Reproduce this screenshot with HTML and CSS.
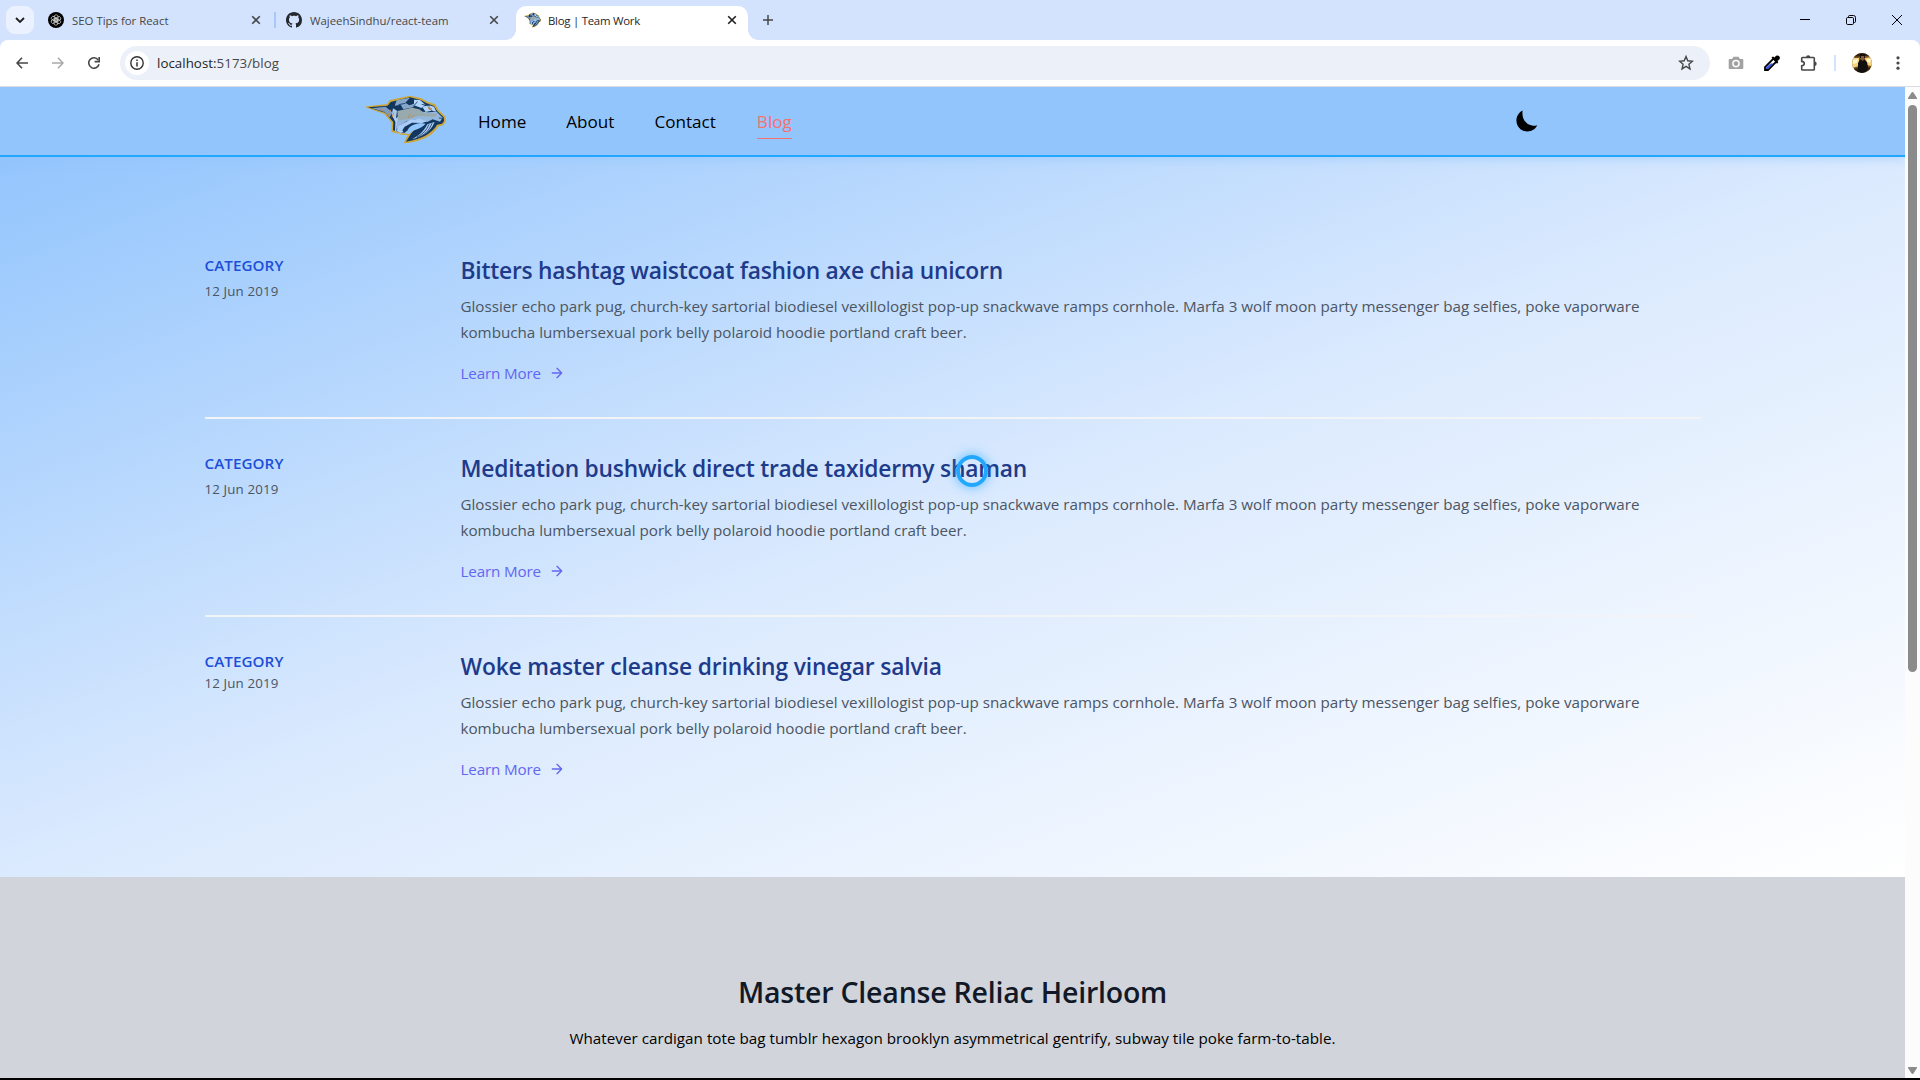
FILE: index.html
```
<!DOCTYPE html>
<html lang="en">
<head>
<meta charset="utf-8">
<title>Blog | Team Work</title>
<link rel="stylesheet" href="styles.css">
</head>
<body>
<svg class="defs" width="0" height="0" aria-hidden="true">
  <symbol id="cat" viewBox="0 0 270 174">
    <path d="M20 51L82 44L90 32L114 27L150 19L184 27L202 37L225 45L235 62L254 80L255 94L249 104L233 108C220 132 190 152 134 158L146 134L124 132L96 124L97 98L74 70Z" fill="#cda63a" stroke="#cda63a" stroke-width="4" stroke-linejoin="round"/>
    <path d="M24 52L83 47L92 36L116 30L150 22L182 30L200 40L222 48L232 64L251 82L252 93L246 101L231 104C218 128 188 146 138 155C148 140 152 130 160 122L142 128L126 129L99 121L100 96L76 68Z" fill="#13365f"/>
    <path d="M143 121C146 112 156 102 182 99L197 101C190 109 178 116 163 121L152 128L147 133L132 130Z" fill="#93c5fd"/>
    <path d="M99 55l12 7-3 23 13-11 12 3-8 14-14 14-2 23 22 4-16-1-10-8 1-27-11-22z" fill="#a9c9ee"/>
    <path d="M35 55l42-5 8 7 12 10-8 15-16-17z" fill="#7d9cc0"/>
    <path d="M110 31l40-8-14 15 12 8 27-9-15 15-30 6-8-14-18 3z" fill="#86a6cc"/>
    <path d="M162 29l18 1 16 14-12 10-22-8zM187 51l18-6 17 5 7 15-15-3-17 4z" fill="#b4d5fb"/>
    <path d="M130 68l34-5 40 4 26-2 18 18-8 12-22-7-16 8-28-9-34 6-30 22 2-22z" fill="#94b7de"/>
    <path d="M112 63l44-10 22 5 14 11 40 3-8 8-49-2-31 10-30 3z" fill="#99aaae"/>
    <path d="M112 110l36-20 30-4 23 8-14 5-31-1-22 12-7 11 4 6-10 2-10-5z" fill="#a9cdf7"/>
    <path d="M202 103l22-7-6 12c-13 20-31 33-63 40 20-10 37-24 47-45z" fill="#a9cdf7"/>
    <path d="M216 100c-8 22-24 37-48 45M207 103c-7 17-18 29-36 38M185 43l25 5M160 50l12-15M204 50l13 13M116 44l20-4M237 84l10 1" fill="none" stroke="#173a63" stroke-width="2.500"/>
    <path d="M205 53l10 3-7 3zM66 57l5 8M92 59l-7 17M101 68l-5 14M151 72l-6 12M162 75l-7 8" fill="none" stroke="#c58a4a" stroke-width="3"/>
  </symbol>
  <symbol id="arrow" viewBox="0 0 24 24"><path d="M5 12h14M12 5l7 7-7 7" fill="none" stroke="currentColor" stroke-width="2" stroke-linecap="round" stroke-linejoin="round"/></symbol>
  <symbol id="close" viewBox="0 0 10 10"><path d="M1.200 1.200l7.600 7.600M8.800 1.200L1.200 8.800" stroke="currentColor" stroke-width="1.600"/></symbol>
</svg>

<div class="tabstrip">
  <div class="tab-search"><svg width="10" height="6" viewBox="0 0 10 6"><path d="M1 1l4 4 4-4" fill="none" stroke="#1f1f1f" stroke-width="1.800"/></svg></div>
  <div class="tab tab-seo">
    <svg width="16" height="16" viewBox="0 0 16 16"><circle cx="8" cy="8" r="8"/><g fill="none" stroke="#c9c9c9" stroke-width=".8"><rect x="6.300" y="2.800" width="3.700" height="6.400" rx="1.800"/><rect x="6.300" y="2.800" width="3.700" height="6.400" rx="1.800" transform="rotate(60 8 8)"/><rect x="6.300" y="2.800" width="3.700" height="6.400" rx="1.800" transform="rotate(120 8 8)"/><rect x="6.300" y="2.800" width="3.700" height="6.400" rx="1.800" transform="rotate(180 8 8)"/><rect x="6.300" y="2.800" width="3.700" height="6.400" rx="1.800" transform="rotate(240 8 8)"/><rect x="6.300" y="2.800" width="3.700" height="6.400" rx="1.800" transform="rotate(300 8 8)"/></g></svg>
    <span class="tab-title">SEO Tips for React</span>
    <svg class="x" width="10" height="10"><use href="#close"/></svg>
  </div>
  <span class="tab-sep"></span>
  <div class="tab tab-git">
    <svg width="16" height="16" viewBox="0 0 16 16"><path fill="#24292f" fill-rule="evenodd" d="M8 0C3.580 0 0 3.580 0 8c0 3.540 2.290 6.530 5.470 7.590.4.070.55-.17.55-.38 0-.19-.01-.82-.01-1.490-2.010.37-2.530-.49-2.690-.94-.09-.23-.48-.94-.82-1.130-.28-.15-.68-.52-.01-.53.63-.01 1.080.58 1.230.82.72 1.210 1.870.87 2.330.66.07-.52.28-.87.51-1.070-1.780-.2-3.640-.89-3.640-3.950 0-.87.31-1.590.82-2.150-.08-.2-.36-1.020.08-2.120 0 0 .67-.21 2.200.82.64-.18 1.320-.27 2-.27s1.360.09 2 .27c1.530-1.040 2.200-.82 2.200-.82.44 1.100.16 1.920.08 2.120.51.56.82 1.270.82 2.150 0 3.070-1.870 3.750-3.650 3.950.29.25.54.73.54 1.480 0 1.070-.01 1.930-.01 2.200 0 .21.15.46.55.38A8.010 8.010 0 0016 8c0-4.420-3.580-8-8-8z"/></svg>
    <span class="tab-title">WajeehSindhu/react-team</span>
    <svg class="x" width="10" height="10"><use href="#close"/></svg>
  </div>
  <div class="tab tab-active">
    <svg width="17" height="16" viewBox="14 12 246 152" preserveAspectRatio="none"><use href="#cat" width="270" height="174"/></svg>
    <span class="tab-title tight">Blog | Team Work</span>
    <svg class="x" width="10" height="10"><use href="#close"/></svg>
  </div>
  <svg class="new-tab" width="10" height="10" viewBox="0 0 10 10"><path d="M5 0v10M0 5h10" stroke="#474747" stroke-width="1.500"/></svg>
  <div class="window-buttons">
    <svg width="10" height="10" viewBox="0 0 10 10"><path d="M0 4.500h10" stroke="#000"/></svg>
    <svg width="10" height="10" viewBox="0 0 10 10"><path d="M2.500 2V1.500q0-1 1-1h4q2 0 2 2v4q0 1-1 1H8" fill="none" stroke="#000"/><rect x=".5" y="2.500" width="7" height="7" rx="1.200" fill="none" stroke="#000"/></svg>
    <svg width="10" height="10" viewBox="0 0 10 10"><path d="M0 0l10 10M10 0L0 10" stroke="#000"/></svg>
  </div>
</div>

<div class="toolbar-back">
<div class="toolbar">
  <div class="nav-buttons">
    <svg width="12" height="12" viewBox="0 0 12 12"><path d="M12 6H1.200M6 .8L1 6l5 5.200" fill="none" stroke="#474747" stroke-width="1.600"/></svg>
    <svg width="12" height="12" viewBox="0 0 12 12"><path d="M0 6h10.800M6 .8L11 6l-5 5.200" fill="none" stroke="#aaa" stroke-width="1.600"/></svg>
    <svg width="12" height="12" viewBox="0 0 12 12"><path d="M10.200 3A5.200 5.200 0 1 0 11 7.300" fill="none" stroke="#474747" stroke-width="1.600"/><path d="M11.200 0v4.600H6.600" fill="none" stroke="#474747" stroke-width="1.600"/></svg>
  </div>
  <div class="omnibox">
    <span class="site-info"><svg width="14" height="14" viewBox="0 0 14 14"><circle cx="7" cy="7" r="6.200" fill="none" stroke="#333" stroke-width="1.400"/><path d="M7 6.200v4.200M7 3.400V5" stroke="#333" stroke-width="1.500"/></svg></span>
    <span class="url"><span class="host">localhost:</span>5173/blog</span>
    <svg class="star" width="16" height="16" viewBox="0 0 16 16"><path d="M8 1.500l1.800 4.300 4.700.4-3.600 3.100 1.100 4.600L8 11.400l-4 2.500 1.100-4.600L1.500 6.200l4.700-.4z" fill="none" stroke="#474747" stroke-width="1.400"/></svg>
  </div>
  <div class="extensions">
    <svg width="16" height="16" viewBox="0 0 16 16"><path fill="#a2a2a2" d="M1.500 4H4l1.500-2.200h5L12 4h2.500q.8 0 .8.800v8.400q0 .8-.8.800h-13q-.8 0-.8-.8V4.800q0-.8.8-.8z"/><circle cx="8" cy="8.600" r="3.100" fill="#a2a2a2" stroke="#fff" stroke-width="1.500"/></svg>
    <svg class="dropper" width="16" height="16" viewBox="0 0 16 16"><path d="M9.500 3.500l3 3L4 15H1v-3z" fill="#fff" stroke="#000" stroke-width="1.800"/><path d="M6.500 8.500h3L4 14H2v-1.500z" fill="#3b55d9"/><path d="M7.500 2.500L9 1.500l1.500 1L12 .8q2-1 3.200.4t.3 3L13.500 6l.8 1.200-1.300 1.600z"/></svg>
    <svg width="18" height="18" viewBox="0 0 18 18"><path d="M2.500 3.500h11q.8 0 .8.800v10.900q0 .8-.8.800h-11q-.8 0-.8-.8v-3.400q2.600-.3 2.600-2.200T1.700 7.400V4.300q0-.8.800-.8z" fill="none" stroke="#474747" stroke-width="1.600"/><path d="M6 3.500a2.200 2.200 0 0 1 4.400 0zM14.500 7.500a2.200 2.200 0 0 1 0 4.400z" fill="#474747"/></svg>
  </div>
  <span class="bar-sep"></span>
  <svg class="avatar" width="20" height="20" viewBox="0 0 20 20"><clipPath id="round"><circle cx="10" cy="10" r="10"/></clipPath><g clip-path="url(#round)"><path fill="#7b5520" d="M0 0h20v20H0z"/><path fill="#f3d37b" d="M0 5l7 0v8l-7 2zM13 5l7-1v9l-6-1z"/><path fill="#fff6d0" d="M1 7l5-1-1 4-4 1zM15 6h4l-1 4-3-1z"/><path fill="#342010" d="M0 0h20v3L12 3 0 4zM0 16l6-1v5H0zM15 14l5 1v5h-5z"/><path fill="#12100f" d="M6 20V10l2-3.500h4.500L15 9l1 5-2 6zM8 1h5v4H8z"/><path fill="#8b5a3b" d="M9 3h3.200v3.500L10.500 8 9 6.500z"/></g></svg>
  <svg class="dots" width="4" height="14" viewBox="0 0 4 14" fill="#474747"><circle cx="2" cy="1.800" r="1.600"/><circle cx="2" cy="7" r="1.600"/><circle cx="2" cy="12.200" r="1.600"/></svg>
</div>
</div>

<div class="viewport">
  <div class="page">
    <header class="site-nav">
      <svg class="logo" width="90" height="58"><use href="#cat"/></svg>
      <nav class="links">
        <a>Home</a><a>About</a><a>Contact</a><a class="current">Blog</a>
      </nav>
      <svg class="moon" width="22" height="22" viewBox="0 0 22 22"><path d="M6.600.5C2.700 2.600.4 6.200.4 10.500c0 6.200 4.800 10.900 10.900 10.900 4.500 0 8.200-2.400 10-6.200-1.500.5-2.800.6-4.300.5C10.500 15.300 5.400 9.500 6.600.5z"/></svg>
    </header>
    <main class="posts">
      <article class="post">
        <div class="meta"><span class="category">CATEGORY</span><span class="date">12 Jun 2019</span></div>
        <div class="body">
          <h2>Bitters hashtag waistcoat fashion axe chia unicorn</h2>
          <p>Glossier echo park pug, church-key sartorial biodiesel vexillologist pop-up snackwave ramps cornhole. Marfa 3 wolf moon party messenger bag selfies, poke vaporware<br>kombucha lumbersexual pork belly polaroid hoodie portland craft beer.</p>
          <a class="more">Learn More<svg width="16" height="16"><use href="#arrow"/></svg></a>
        </div>
      </article>
      <article class="post">
        <div class="meta"><span class="category">CATEGORY</span><span class="date">12 Jun 2019</span></div>
        <div class="body">
          <h2>Meditation bushwick direct trade taxidermy shaman</h2>
          <p>Glossier echo park pug, church-key sartorial biodiesel vexillologist pop-up snackwave ramps cornhole. Marfa 3 wolf moon party messenger bag selfies, poke vaporware<br>kombucha lumbersexual pork belly polaroid hoodie portland craft beer.</p>
          <a class="more">Learn More<svg width="16" height="16"><use href="#arrow"/></svg></a>
        </div>
      </article>
      <article class="post">
        <div class="meta compact"><span class="category">CATEGORY</span><span class="date">12 Jun 2019</span></div>
        <div class="body">
          <h2 class="loose">Woke master cleanse drinking vinegar salvia</h2>
          <p>Glossier echo park pug, church-key sartorial biodiesel vexillologist pop-up snackwave ramps cornhole. Marfa 3 wolf moon party messenger bag selfies, poke vaporware<br>kombucha lumbersexual pork belly polaroid hoodie portland craft beer.</p>
          <a class="more">Learn More<svg width="16" height="16"><use href="#arrow"/></svg></a>
        </div>
      </article>
    </main>
    <section class="promo">
      <h1>Master Cleanse Reliac Heirloom</h1>
      <p>Whatever cardigan tote bag tumblr hexagon brooklyn asymmetrical gentrify, subway tile poke farm-to-table.</p>
    </section>
  </div>
  <div class="scrollbar">
    <svg width="9" height="7" viewBox="0 0 9 7"><path d="M4.500 0q.7 0 1.100.7L9 6q.2 1-.6 1H.6Q-.2 7 0 6L3.400.7Q3.800 0 4.500 0z" fill="#8b8b8b"/></svg>
    <div class="thumb"></div>
    <svg width="9" height="7" viewBox="0 0 9 7"><path d="M4.500 7q.7 0 1.100-.7L9 1q.2-1-.6-1H.6Q-.2 0 0 1l3.400 5.300q.4.700 1.100.7z" fill="#8b8b8b"/></svg>
  </div>
</div>
<div class="cursor-ring"></div>
</body>
</html>
```
FILE: styles.css
```
* { box-sizing: border-box; }
html, body { margin: 0; height: 100%; overflow: hidden; }
body {
  display: flex;
  flex-direction: column;
  height: 1080px;
  padding-bottom: 2px;
  background: #000;
  color: #000;
  font: 15.2px/24px "Open Sans", "Noto Sans", sans-serif;
}
svg { display: block; flex: none; }
h1, h2, p { margin: 0; }
.defs { position: absolute; }

/* Tab strip */
.tabstrip {
  display: flex;
  flex: none;
  align-items: center;
  height: 40px;
  padding: 0 18px 0 6px;
  background: #d3e3fd;
  font-size: 11.4px;
  line-height: 18px;
}
.tab-search {
  display: grid;
  place-items: center;
  width: 28px;
  height: 28px;
  border-radius: 9px;
  background: #ebf1fe;
}
.tab { display: flex; align-items: center; gap: 8px; color: #474747; }
.tab-title { flex: 1; padding-top: 1px; white-space: nowrap; }
.tab-title.tight { letter-spacing: -0.25px; }
.tab .x { color: #474747; }
.tab-seo { width: 213px; margin-left: 14px; }
.tab-sep { width: 2px; height: 16px; margin: 0 10px 0 13px; background: #a8c7fa; }
.tab-git { width: 213px; }
.tab-active {
  position: relative;
  width: 232px;
  height: 34px;
  margin: 6px 0 0 17px;
  padding: 0 11px 6px 8px;
  border-radius: 10px 10px 0 0;
  background: #fff;
  color: #1f1f1f;
}
.tab-active .tab-title { margin-left: -1px; }
.tab-active .x { color: #1f1f1f; }
.tab-active::before, .tab-active::after {
  content: "";
  position: absolute;
  bottom: 0;
  width: 10px;
  height: 10px;
}
.tab-active::before { left: -10px; background: radial-gradient(circle at 0 0, transparent 9.5px, #fff 10px); }
.tab-active::after { right: -10px; background: radial-gradient(circle at 100% 0, transparent 9.5px, #fff 10px); }
.new-tab { margin-left: 15px; }
.window-buttons { display: flex; gap: 36px; margin-left: auto; }

/* Toolbar */
.toolbar-back { flex: none; background: #d3e3fd; }
.toolbar {
  display: flex;
  align-items: center;
  height: 47px;
  padding: 0 20px 1px 16px;
  border-bottom: 1px solid #d9dde3;
  border-radius: 8px 8px 0 0;
  background: #fff;
}
.nav-buttons { display: flex; gap: 24px; width: 104px; }
.omnibox {
  display: flex;
  align-items: center;
  width: 1590px;
  height: 34px;
  padding: 0 16px 0 5px;
  border-radius: 17px;
  background: #ecf0f9;
}
.site-info {
  display: grid;
  place-items: center;
  width: 24px;
  height: 24px;
  border-radius: 50%;
  background: #fff;
}
.url { margin-left: 8px; color: #474747; font-size: 13.3px; letter-spacing: 0.04px; }
.host { color: #1f1f1f; }
.star { margin-left: auto; }
.extensions { display: flex; align-items: center; gap: 19px; margin-left: 18px; }
.dropper { margin: 0 1px; }
.bar-sep { width: 2px; height: 16px; margin: 0 16px; background: #d3e3fd; }
.dots { margin-left: 24px; }

/* Page area */
.viewport { display: flex; flex: 1; min-height: 0; }
.page { flex: 1; overflow: hidden; background: #d1d5db; }
.site-nav {
  position: relative;
  display: flex;
  align-items: center;
  height: 70px;
  padding: 0 367px 0 360px;
  border-bottom: 2px solid #22a7ff;
  background: #93c5fd;
  box-shadow: 0 4px 8px rgba(147, 197, 253, 0.4);
}
.logo { margin-top: -4px; }
.links { display: flex; gap: 40px; margin-left: 28px; font-size: 17.1px; }
.links a { margin-top: 4px; padding: 3px 0 4px; border-bottom: 1px solid transparent; }
.links .current { margin-left: 1px; border-color: #f87171; color: #f87171; }
.moon { margin-left: auto; }

.posts {
  height: 720px;
  padding: 64px 204.500px;
  background: linear-gradient(to bottom right, #93c5fd, #dbeafe, #fff);
}
.post { display: flex; padding: 32px 0; }
.post + .post { border-top: 2px solid #f3f4f6; }
.meta { display: flex; flex-direction: column; gap: 4px; width: 256px; }
.meta.compact { gap: 0; }
.category { color: #1d4ed8; font-weight: 600; letter-spacing: 0.07px; }
.date { color: #4b5563; font-size: 13.3px; line-height: 20px; letter-spacing: 0.14px; }
.body { flex: 1; }
.body h2 {
  height: 32px;
  margin-bottom: 8px;
  padding-top: 2px;
  color: #1e3a8a;
  font-size: 22.8px;
  font-weight: 600;
  line-height: 32px;
  letter-spacing: -0.23px;
}
.body h2.loose { letter-spacing: -0.15px; }
.body p { color: #4b5563; line-height: 26px; letter-spacing: -0.01px; white-space: nowrap; }
.more {
  display: flex;
  align-items: center;
  gap: 8px;
  margin-top: 16px;
  color: #6366f1;
  letter-spacing: -0.15px;
}

.promo { padding-top: 97px; text-align: center; }
.promo h1 {
  margin-bottom: 15px;
  color: #111827;
  font-size: 28.500px;
  font-weight: 600;
  line-height: 36px;
  letter-spacing: -0.21px;
}
.promo p { line-height: 26px; letter-spacing: 0.025px; }

/* Scrollbar */
.scrollbar {
  display: flex;
  flex-direction: column;
  align-items: center;
  width: 15px;
  padding: 5px 0 4px;
  background: #fcfcfc;
}
.thumb { width: 9px; height: 567px; margin: 6px 0 auto; border-radius: 5px; background: #8b8b8b; }

/* Busy pointer */
.cursor-ring {
  position: absolute;
  left: 956px;
  top: 455px;
  width: 32px;
  height: 32px;
  border: 4px solid #22a7ff;
  border-radius: 50%;
  box-shadow: 0 0 12px rgba(34, 167, 255, 0.7);
}
```
